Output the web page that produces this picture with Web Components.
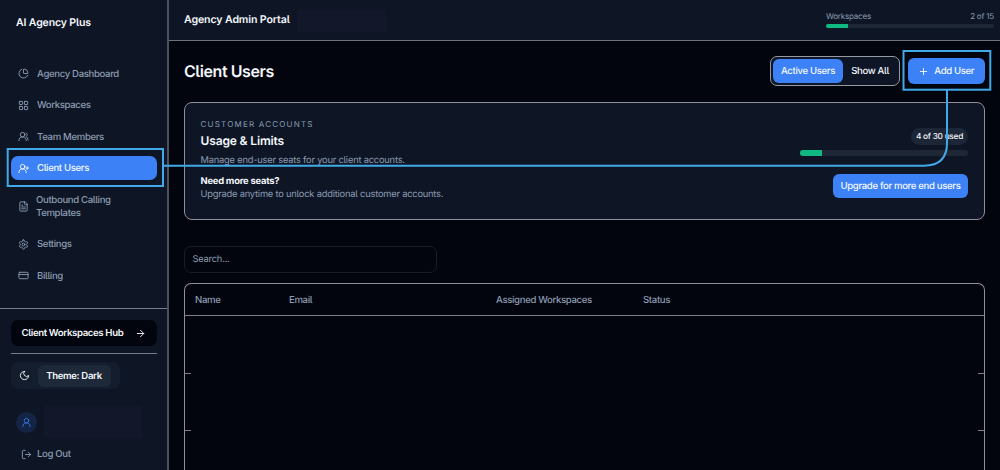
<!DOCTYPE html>
<html lang="en">
<head>
<meta charset="utf-8">
<title>Agency Admin Portal</title>
<style>
    html, body { margin: 0; height: 100%; overflow: hidden; background: #02050e; }
    body {
        font: 500 9.6px/13px Inter, "Liberation Sans", sans-serif;
        font-feature-settings: "cv05";
        letter-spacing: -0.35px;
        text-rendering: geometricPrecision;
        color: #f4f7fb;
        --panel: #0e1626;
        --page: #02050e;
        --muted: #8c9bb1;
        --blue: #3c82f6;
        --line: #8d9098;
        --mark: #42a9e8;
    }
</style>
</head>
<body>
<agency-app></agency-app>
<script>
const ICONS = {
    chart: '<path d="M21 12c.55 0 1-.45.95-1a10 10 0 0 0-8.95-8.95c-.55-.05-1 .4-1 .95v8a1 1 0 0 0 1 1z"/><path d="M21.2 15.9A10 10 0 1 1 8 2.83"/>',
    grid: '<rect x="3" y="3" width="7" height="7" rx="1"/><rect x="14" y="3" width="7" height="7" rx="1"/><rect x="14" y="14" width="7" height="7" rx="1"/><rect x="3" y="14" width="7" height="7" rx="1"/>',
    users: '<path d="M18 21a8 8 0 0 0-16 0"/><circle cx="10" cy="8" r="5"/><path d="M22 20c0-3.4-2-6.5-4-8a5 5 0 0 0-.5-8.3"/>',
    userPlus: '<path d="M18 21a8 8 0 0 0-16 0"/><circle cx="10" cy="8" r="5"/><path d="M20 8v6M23 11h-6"/>',
    file: '<path d="M15 2H6a2 2 0 0 0-2 2v16a2 2 0 0 0 2 2h12a2 2 0 0 0 2-2V7z"/><path d="M14 2v4a2 2 0 0 0 2 2h4M8 9h2M8 13h8M8 17h8"/>',
    gear: '<path d="M12.2 2h-.4a2 2 0 0 0-2 2v.2a2 2 0 0 1-1 1.7l-.4.3a2 2 0 0 1-2 0l-.2-.1a2 2 0 0 0-2.7.7l-.2.4a2 2 0 0 0 .7 2.7l.2.1a2 2 0 0 1 1 1.7v.5a2 2 0 0 1-1 1.8l-.2.1a2 2 0 0 0-.7 2.7l.2.4a2 2 0 0 0 2.7.7l.2-.1a2 2 0 0 1 2 0l.4.3a2 2 0 0 1 1 1.7v.2a2 2 0 0 0 2 2h.4a2 2 0 0 0 2-2v-.2a2 2 0 0 1 1-1.7l.4-.3a2 2 0 0 1 2 0l.2.1a2 2 0 0 0 2.7-.7l.2-.4a2 2 0 0 0-.7-2.7l-.2-.1a2 2 0 0 1-1-1.8v-.5a2 2 0 0 1 1-1.7l.2-.1a2 2 0 0 0 .7-2.7l-.2-.4a2 2 0 0 0-2.7-.7l-.2.1a2 2 0 0 1-2 0l-.4-.3a2 2 0 0 1-1-1.7V4a2 2 0 0 0-2-2z"/><circle cx="12" cy="12" r="3"/>',
    card: '<rect x="2" y="5" width="20" height="14" rx="2"/><path d="M2 10h20"/>',
    arrow: '<path d="M5 12h14M12 5l7 7-7 7"/>',
    moon: '<path d="M12 3a6 6 0 0 0 9 9 9 9 0 1 1-9-9z"/>',
    user: '<circle cx="12" cy="8" r="5"/><path d="M20 21a8 8 0 0 0-16 0"/>',
    logout: '<path d="M9 21H5a2 2 0 0 1-2-2V5a2 2 0 0 1 2-2h4M10 12h11M16 7l5 5-5 5"/>',
    plus: '<path d="M5 12h14M12 5v14"/>'
};

class BaseElement extends HTMLElement {
    connectedCallback() {
        if (this.shadowRoot) {
            return;
        }
        const root = this.attachShadow({ mode: "open" });
        root.innerHTML = `<style>* { box-sizing: border-box; } ${this.css()}</style>${this.html()}`;
    }
    css() {
        return "";
    }
    html() {
        return "<slot></slot>";
    }
}

customElements.define("ui-icon", class extends BaseElement {
    css() {
        return `
            :host { display: block; flex: none; width: 11px; height: 11px; }
            svg { display: block; width: 100%; height: 100%; }`;
    }
    html() {
        return `<svg viewBox="0 0 24 24" fill="none" stroke="currentColor" stroke-width="2"
            stroke-linecap="round" stroke-linejoin="round">${ICONS[this.getAttribute("name")]}</svg>`;
    }
});

customElements.define("ui-progress", class extends BaseElement {
    css() {
        return `
            :host { display: block; height: 4px; border-radius: 3px; background: #1d2736; overflow: hidden; }
            div { height: 100%; width: ${this.getAttribute("value")}%; background: #10b981; }`;
    }
    html() {
        return "<div></div>";
    }
});

customElements.define("ui-button", class extends BaseElement {
    css() {
        return `
            :host {
                display: flex; align-items: center; justify-content: center;
                height: 24px; box-sizing: border-box; padding-top: 1px;
                border-radius: 6px; background: var(--blue); color: #f4f8ff; white-space: nowrap;
            }`;
    }
});

customElements.define("nav-item", class extends BaseElement {
    css() {
        return `
            :host {
                display: flex; align-items: center; gap: 8px; min-height: 24px;
                padding: 0 7.5px; box-sizing: border-box; border-radius: 7px; color: var(--muted);
            }
            span { padding-top: 1px; }
            :host([active]) { background: var(--blue); color: #f4f8ff; }
            :host([tall]) { min-height: 37px; gap: 7px; }`;
    }
    html() {
        return `<ui-icon name="${this.getAttribute("icon")}"></ui-icon><span><slot></slot></span>`;
    }
});

customElements.define("side-bar", class extends BaseElement {
    css() {
        return `
            :host {
                display: flex; flex-direction: column; height: 470px; box-sizing: border-box;
                background: var(--panel); border-right: 2px solid #4c515b;
            }
            .brand { padding: 16px 16px 0; font-weight: 600; font-size: 10.5px; letter-spacing: -0.13px; }
            nav { display: flex; flex-direction: column; gap: 7.5px; padding: 32.6px 10px 0 10.5px; height: 279px; }
            .foot { flex: 1; border-top: 1.5px solid #777c87; padding: 11px 10px 0 10.5px; }
            .hub {
                display: flex; align-items: center; justify-content: space-between; height: 25.5px;
                padding: 1px 11px 0; border-radius: 7px; background: #02050e; font-weight: 600;
            }
            .rule { height: 1px; margin: 7.5px 0 8px; background: #777c87; }
            .theme {
                display: flex; align-items: center; gap: 8px; width: 109px; height: 27px;
                padding-left: 8px; border-radius: 7px; background: #141d2d;
            }
            .theme span {
                display: grid; place-items: center; width: 73px; height: 22px; padding-top: 1px;
                border-radius: 6px; background: #1d2838; font-weight: 600;
            }
            .account { display: flex; align-items: center; gap: 7px; margin: 17px 0 0 5.5px; }
            .avatar { display: grid; place-items: center; width: 21px; height: 21px; border-radius: 50%; background: #132445; color: #3574dc; }
            .name { width: 98px; height: 32px; border-radius: 2px; background: #12172a; }
            .logout { display: flex; align-items: center; gap: 5.5px; margin: 10px 0 0 10px; color: var(--muted); }`;
    }
    html() {
        return `
            <div class="brand">AI Agency Plus</div>
            <nav>
                <nav-item icon="chart">Agency Dashboard</nav-item>
                <nav-item icon="grid">Workspaces</nav-item>
                <nav-item icon="users">Team Members</nav-item>
                <nav-item icon="userPlus" active>Client Users</nav-item>
                <nav-item icon="file" tall>Outbound Calling<br>Templates</nav-item>
                <nav-item icon="gear">Settings</nav-item>
                <nav-item icon="card">Billing</nav-item>
            </nav>
            <div class="foot">
                <div class="hub">Client Workspaces Hub <ui-icon name="arrow"></ui-icon></div>
                <div class="rule"></div>
                <div class="theme"><ui-icon name="moon"></ui-icon><span>Theme: Dark</span></div>
                <div class="account">
                    <div class="avatar"><ui-icon name="user"></ui-icon></div>
                    <div class="name"></div>
                </div>
                <div class="logout"><ui-icon name="logout"></ui-icon>Log Out</div>
            </div>`;
    }
});

customElements.define("top-bar", class extends BaseElement {
    css() {
        return `
            :host {
                display: flex; align-items: center; height: 41px; box-sizing: border-box;
                padding: 0 6px 0 15px; background: var(--panel); border-bottom: 1px solid #6d727b;
            }
            b { font-size: 10.6px; font-weight: 600; letter-spacing: -0.12px; margin-bottom: 1px; width: 113px; white-space: nowrap; }
            .org { width: 89px; height: 22px; margin-top: 2px; background: #13172a; }
            .quota { width: 168px; margin: 0 0 2px auto; font-size: 8px; font-weight: 400; letter-spacing: -0.2px; color: var(--muted); }
            .quota div { display: flex; justify-content: space-between; line-height: 10px; margin-bottom: 3px; }`;
    }
    html() {
        return `
            <b>Agency Admin Portal</b>
            <div class="org"></div>
            <div class="quota">
                <div><span>Workspaces</span><span>2 of 15</span></div>
                <ui-progress value="13.3"></ui-progress>
            </div>`;
    }
});

customElements.define("user-filter", class extends BaseElement {
    css() {
        return `
            :host {
                display: flex; align-items: center; width: 130px; height: 30px; box-sizing: border-box;
                padding: 0 2px; border: 1px solid #9599a1; border-radius: 7px; background: var(--panel);
            }
            ui-button { width: 70px; }
            span { flex: 1; padding-top: 1px; text-align: center; }`;
    }
    html() {
        return "<ui-button>Active Users</ui-button><span>Show All</span>";
    }
});

customElements.define("usage-card", class extends BaseElement {
    css() {
        return `
            :host {
                display: flex; justify-content: space-between; height: 118px; box-sizing: border-box;
                padding: 14.5px 15.5px 0; border: 1px solid var(--line); border-radius: 8px; background: var(--panel);
            }
            p, h2 { margin: 0; }
            p { font-size: 9.3px; font-weight: 400; letter-spacing: -0.2px; color: var(--muted); }
            .over { font-size: 8px; letter-spacing: 1.2px; }
            h2 { margin: 3px 0 6.5px; font-size: 12px; line-height: 14px; font-weight: 600; letter-spacing: -0.14px; }
            strong { display: block; margin-top: 8px; font-size: 9.4px; font-weight: 700; letter-spacing: -0.22px; }
            .side { display: flex; flex-direction: column; align-items: flex-end; width: 168.5px; padding-top: 10.5px; }
            .pill {
                display: grid; place-items: center; width: 57px; height: 17px; padding-top: 1px;
                border-radius: 9px; background: #1c2637; font-size: 8.3px; letter-spacing: -0.26px;
            }
            ui-progress { width: 100%; height: 5.5px; margin: 5px 0 18.5px; }
            ui-button { width: 135px; }`;
    }
    html() {
        return `
            <div>
                <p class="over">CUSTOMER ACCOUNTS</p>
                <h2>Usage &amp; Limits</h2>
                <p>Manage end-user seats for your client accounts.</p>
                <strong>Need more seats?</strong>
                <p>Upgrade anytime to unlock additional customer accounts.</p>
            </div>
            <div class="side">
                <div class="pill">4 of 30 used</div>
                <ui-progress value="13.3"></ui-progress>
                <ui-button>Upgrade for more end users</ui-button>
            </div>`;
    }
});

customElements.define("user-table", class extends BaseElement {
    css() {
        return `
            :host {
                display: block; flex: 1; box-sizing: border-box;
                border: 1px solid var(--line); border-bottom: 0; border-radius: 7px 7px 0 0;
            }
            .head {
                display: grid; grid-template-columns: 94px 207px 147px 1fr; align-items: center;
                height: 32px; padding: 1px 0 0 10px; border-bottom: 1px solid #7c7f86; color: var(--muted);
            }
            .row { display: flex; align-items: flex-end; justify-content: space-between; height: 57.5px; }
            .row::before, .row::after { content: ""; width: 6px; height: 1px; background: #7c7f86; }`;
    }
    html() {
        return `
            <div class="head"><span>Name</span><span>Email</span><span>Assigned Workspaces</span><span>Status</span></div>
            <div class="row"></div>
            <div class="row"></div>`;
    }
});

// Highlight boxes and the connector between them, drawn over the page.
customElements.define("callout-overlay", class extends BaseElement {
    css() {
        return `
            :host { position: absolute; inset: 0; pointer-events: none; }
            svg { display: block; fill: none; stroke: var(--mark); stroke-width: 2; }`;
    }
    html() {
        return `
            <svg width="1000" height="470">
                <rect x="7.7" y="149" width="155.3" height="37"/>
                <rect x="903.5" y="51" width="86.8" height="38.7"/>
                <path d="M163 165.7H924Q947 165.7 947 143V90"/>
            </svg>`;
    }
});

customElements.define("agency-app", class extends BaseElement {
    css() {
        return `
            :host { display: grid; grid-template-columns: 169px 1fr; height: 470px; position: relative; background: var(--page); }
            .page { display: flex; flex-direction: column; height: 470px; min-width: 0; }
            main { flex: 1; display: flex; flex-direction: column; padding: 15px 15.5px 0 15px; }
            .title { display: flex; align-items: center; height: 30px; margin-bottom: 16px; gap: 8px; }
            h1 { flex: 1; margin: 0; font-size: 16px; line-height: 20px; font-weight: 600; letter-spacing: -0.42px; }
            .add { width: 76.5px; height: 26px; gap: 5px; }
            .search {
                width: 253px; height: 27px; box-sizing: border-box; margin: 26px 0 10px; padding: 7px 7.5px;
                border: 1px solid #161c28; border-radius: 7px; font-size: 9.3px; line-height: 12px; font-weight: 400;
                letter-spacing: -0.2px; color: var(--muted);
            }`;
    }
    html() {
        return `
            <side-bar></side-bar>
            <div class="page">
                <top-bar></top-bar>
                <main>
                    <div class="title">
                        <h1>Client Users</h1>
                        <user-filter></user-filter>
                        <ui-button class="add"><ui-icon name="plus"></ui-icon>Add User</ui-button>
                    </div>
                    <usage-card></usage-card>
                    <div class="search">Search...</div>
                    <user-table></user-table>
                </main>
            </div>
            <callout-overlay></callout-overlay>`;
    }
});
</script>
</body>
</html>
